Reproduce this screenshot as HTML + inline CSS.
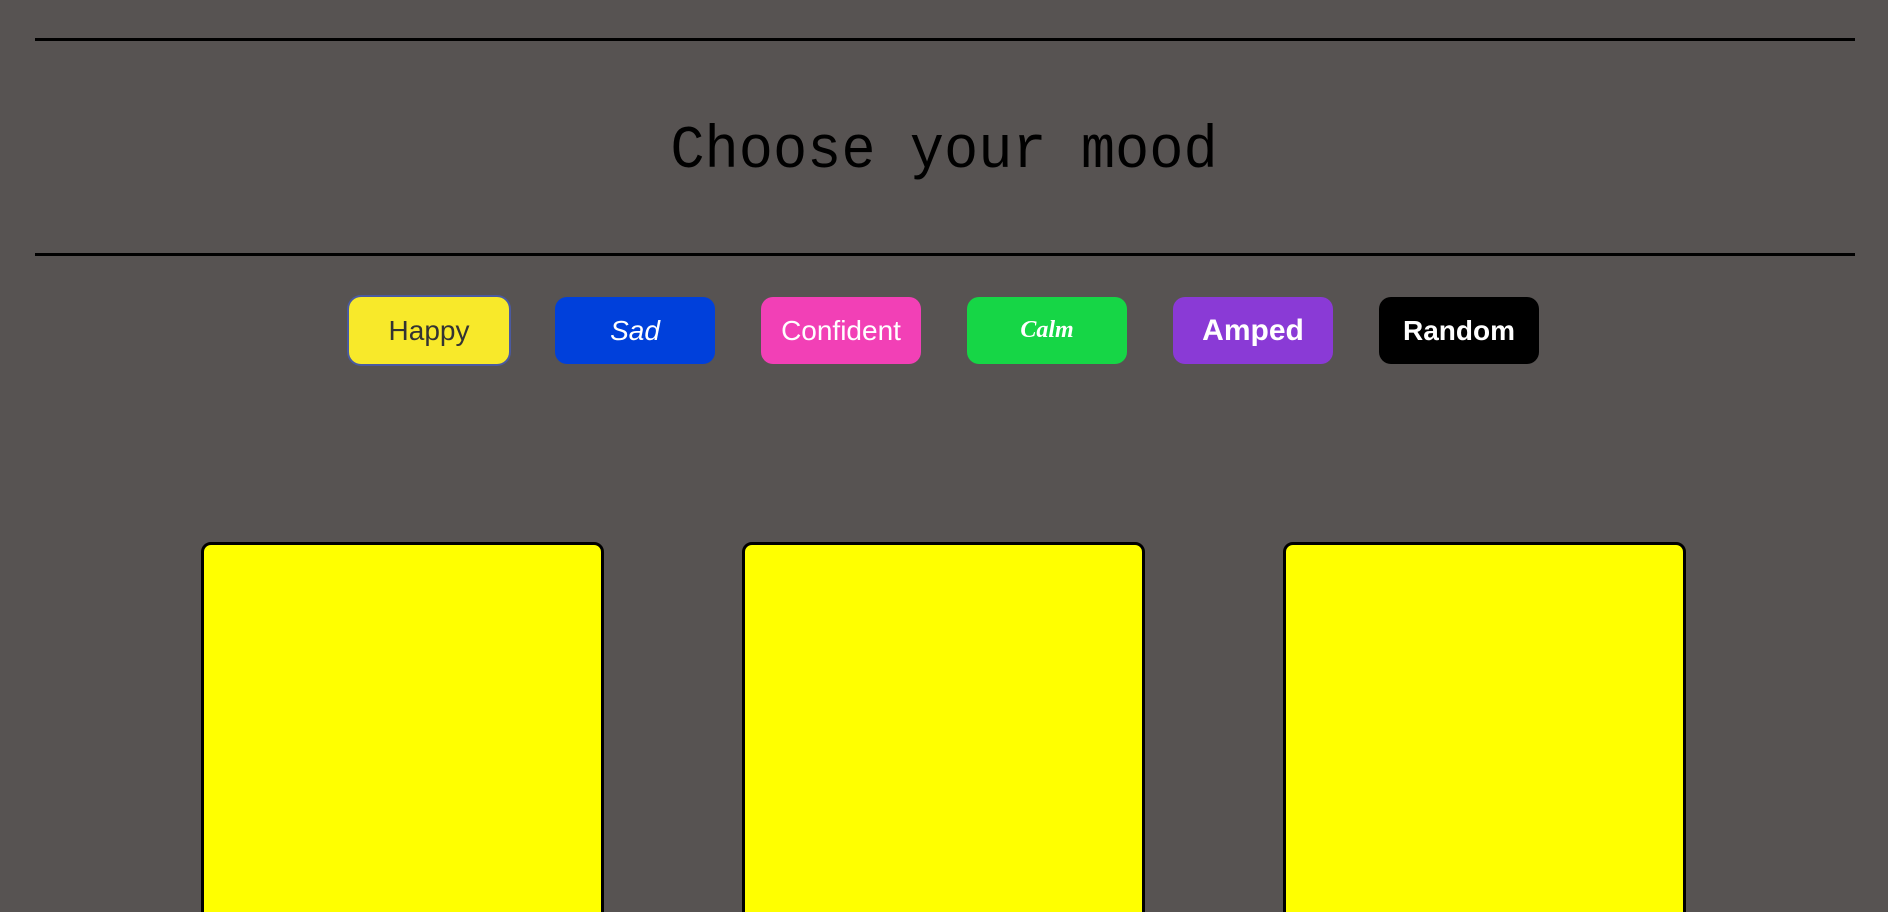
<!DOCTYPE html>
<html style="overflow:hidden;height:912px"><head><style>
body{margin:0;width:1888px;height:912px;background:#575352;position:relative;overflow:hidden;font-family:"Liberation Sans",sans-serif}
.line{position:absolute;left:35px;width:1820px;height:3px;background:#000}
h1{position:absolute;top:118px;left:0;width:1888px;text-align:center;margin:0;font:400 60px "Liberation Mono",monospace;color:#000;transform:scaleX(0.95)}
.b{position:absolute;top:297px;width:160px;height:67px;border-radius:12px;display:flex;align-items:center;justify-content:center;font-size:28px;color:#fff}
.c{position:absolute;top:542px;width:397px;height:380px;background:#ff0;border:3px solid #000;border-radius:10px}
</style></head><body>
<div class="line" style="top:38px"></div>
<h1>Choose your mood</h1>
<div class="line" style="top:253px"></div>
<div class="b" style="left:349px;background:#f8e92a;color:#333;box-shadow:0 0 0 2px #4a5aa0">Happy</div>
<div class="b" style="left:555px;background:#0040db;font-style:italic">Sad</div>
<div class="b" style="left:761px;background:#f240b6">Confident</div>
<div class="b" style="left:967px;background:#16d646;font-style:italic;font-weight:bold;font-family:'Liberation Serif',serif;font-size:24px">Calm</div>
<div class="b" style="left:1173px;background:#8a3ad6;font-weight:bold;font-size:30px">Amped</div>
<div class="b" style="left:1379px;background:#000;font-weight:bold">Random</div>
<div class="c" style="left:201px"></div>
<div class="c" style="left:742px"></div>
<div class="c" style="left:1283px"></div>
</body></html>
